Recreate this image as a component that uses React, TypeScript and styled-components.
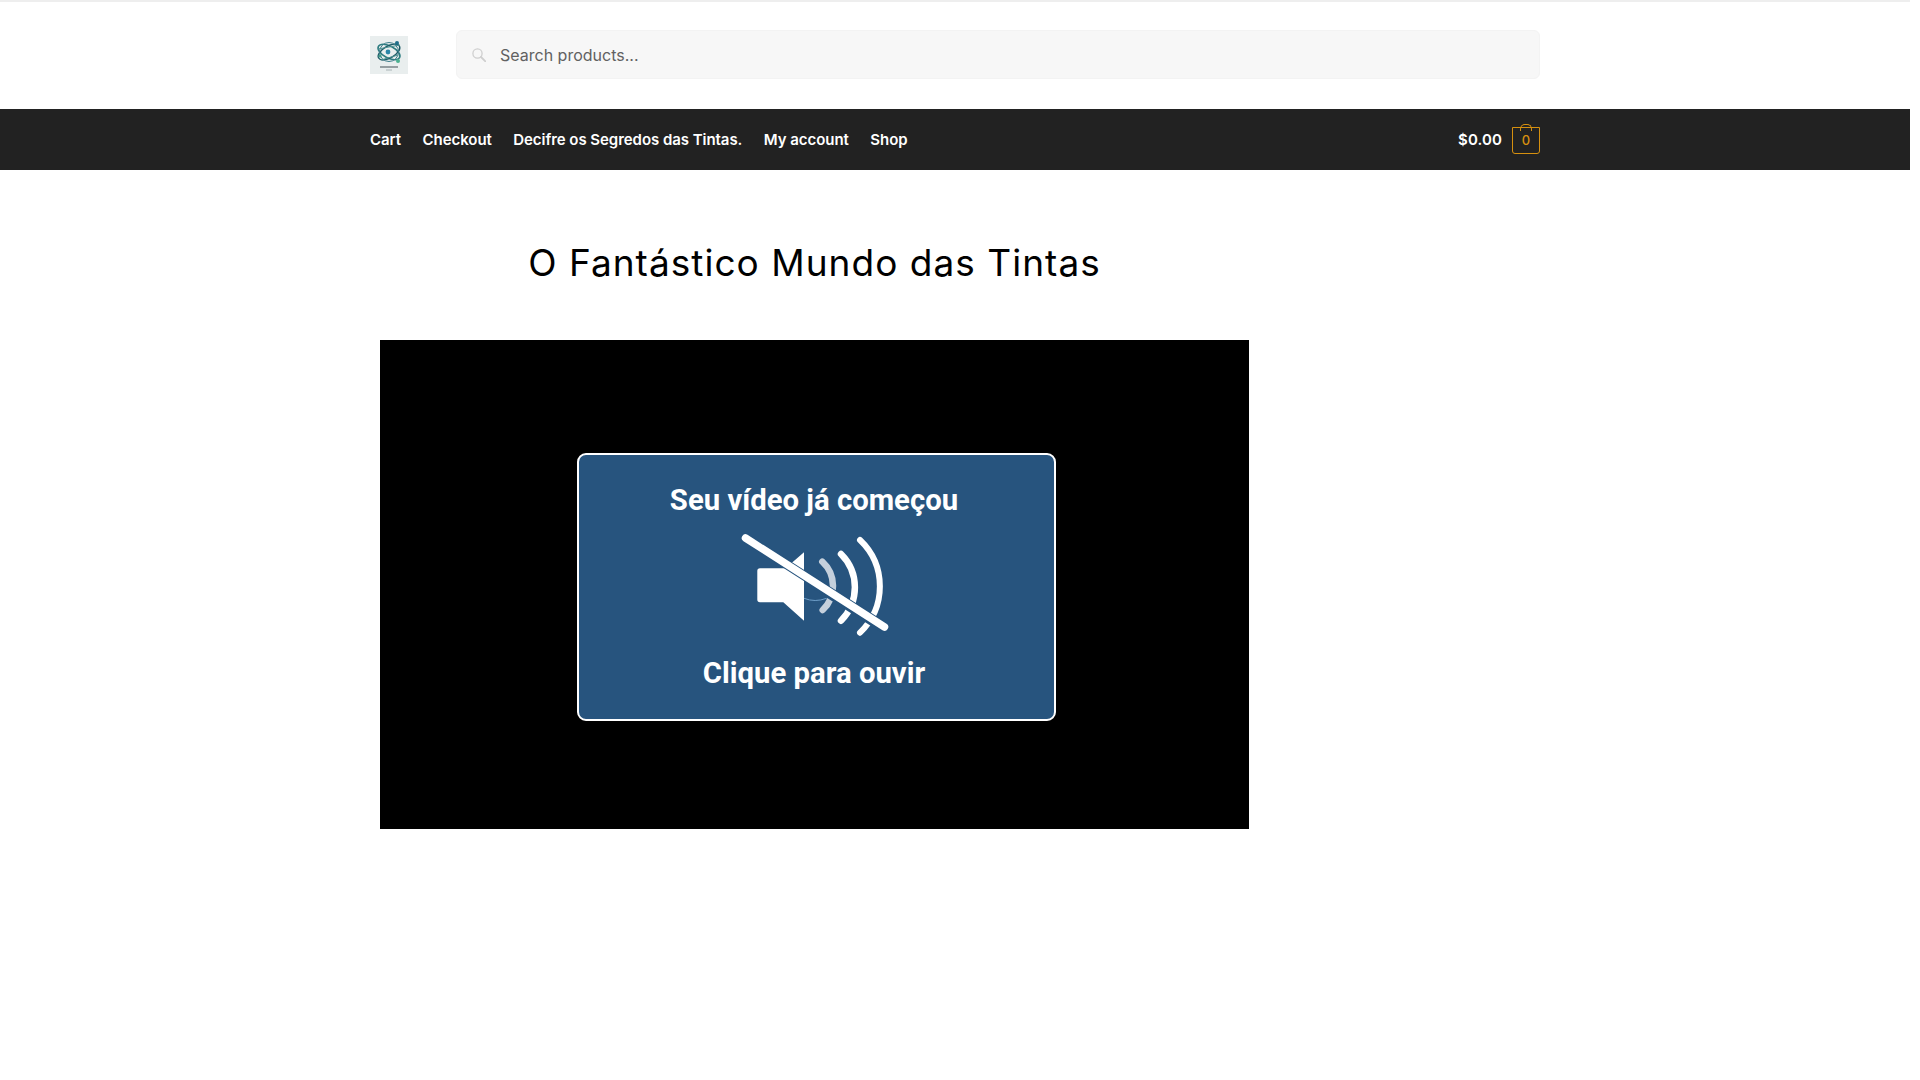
import React from "react";
import styled, { createGlobalStyle } from "styled-components";

const GlobalStyle = createGlobalStyle`
  html, body {
    margin: 0;
    padding: 0;
    background: #ffffff;
    font-family: Inter, "Liberation Sans", sans-serif;
  }
  * {
    box-sizing: border-box;
  }
`;

const Page = styled.div`
  width: 1910px;
  min-height: 1080px;
  background: #ffffff;
`;

const Masthead = styled.header`
  height: 109px;
  border-top: 2px solid #eeeeee;
  display: flex;
  justify-content: center;
`;

const Wrap = styled.div`
  width: 1170px;
  display: flex;
  align-items: center;
`;

const LogoBox = styled.a`
  display: block;
  width: 38px;
  height: 38px;
  margin-right: 48px;
  margin-top: -2px;
`;

const SearchBox = styled.form`
  flex: 1;
  height: 49px;
  margin-top: -2px;
  display: flex;
  align-items: center;
  gap: 14px;
  padding: 0 15px;
  background: #f7f7f7;
  border: 1px solid #f3f3f3;
  border-radius: 6px;
`;

const SearchInput = styled.input`
  flex: 1;
  border: 0;
  outline: 0;
  padding: 0;
  background: transparent;
  font: 400 16px Inter, "Liberation Sans", sans-serif;
  color: #616161;

  &::placeholder {
    color: #616161;
    opacity: 1;
  }
`;

const NavBar = styled.nav`
  height: 61px;
  background: #222222;
  display: flex;
  justify-content: center;
`;

const NavLinks = styled.div`
  display: flex;
  gap: 21.5px;
  flex: 1;
`;

const NavLink = styled.a`
  color: #ffffff;
  font-size: 15px;
  font-weight: 580;
  letter-spacing: -0.05px;
  text-decoration: none;
`;

const CartLink = styled.a`
  display: flex;
  align-items: center;
  gap: 10px;
  color: #ffffff;
  font-size: 15px;
  font-weight: 580;
  letter-spacing: 0.1px;
`;

const Bag = styled.span`
  position: relative;
  width: 28px;
  height: 27px;
  margin-top: 1px;
  border: 1px solid #d6900f;
  border-radius: 0 0 3px 3px;
  display: flex;
  align-items: center;
  justify-content: center;
  color: #d6900f;
  font-size: 13px;
  font-weight: 500;

  &::after {
    content: "";
    position: absolute;
    left: 7px;
    top: -4px;
    width: 10px;
    height: 6px;
    border: 1px solid #d6900f;
    border-bottom: 0;
    border-radius: 5px 5px 0 0;
    background: transparent;
  }
`;

const Content = styled.main`
  width: 1170px;
  margin: 0 auto;
  padding: 0 10px;
`;

const Column = styled.div`
  width: 869px;
  padding-top: 68px;
`;

const Title = styled.h1`
  margin: 0 0 52px;
  text-align: center;
  color: #000000;
  font-size: 37px;
  line-height: 50px;
  font-weight: 400;
  letter-spacing: 1.03px;
`;

const Video = styled.div`
  position: relative;
  height: 489px;
  background: #000000;
`;

const Overlay = styled.div`
  position: absolute;
  left: 197px;
  top: 113px;
  width: 479px;
  height: 268px;
  display: flex;
  flex-direction: column;
  align-items: center;
  padding-top: 25px;
  background: #27547e;
  border: 2px solid #ffffff;
  border-radius: 9px;
`;

const OverlayText = styled.div`
  width: 100%;
  padding-right: 5px;
  text-align: center;
  color: #ffffff;
  font-family: Roboto, "Liberation Sans", sans-serif;
  font-size: 29.3px;
  line-height: 40px;
  font-weight: 700;
`;

const MuteIcon = styled.svg`
  display: block;
  margin: 13px 0 15.5px;
  width: 150px;
  height: 104px;
  flex: none;
  position: relative;
  left: -2px;
`;

const SearchGlyph = () => (
  <svg width="14" height="14" viewBox="0 0 14 14" fill="none" stroke="#cfcfcf" strokeWidth="1.3">
    <circle cx="5.5" cy="5.5" r="4.6" />
    <path d="M9 9l4.4 4.4" strokeLinecap="round" strokeWidth="1.8" />
  </svg>
);

const Logo = () => (
  <svg width="38" height="38" viewBox="0 0 38 38" fill="none">
    <rect width="38" height="38" fill="#e9eeee" />
    <ellipse cx="19" cy="16" rx="12" ry="6" stroke="#2d7c80" strokeWidth="1.6" transform="rotate(28 19 16)" />
    <ellipse cx="19" cy="16" rx="12" ry="6" stroke="#1d5a66" strokeWidth="1.4" transform="rotate(-30 19 16)" />
    <circle cx="19" cy="16" r="9.5" stroke="#3d7d8a" strokeWidth="1" />
    <path d="M8 13L30 9M11 24L28 19" stroke="#4a8f90" strokeWidth="1" />
    <circle cx="18" cy="16" r="2.4" fill="#2a86a8" />
    <circle cx="27" cy="7" r="2" fill="#1f6f8b" />
    <circle cx="28" cy="25" r="2" fill="#4bb08f" />
    <circle cx="10" cy="20" r="1.6" fill="#3f9c88" />
    <path d="M10 31h18" stroke="#5f6b70" strokeWidth="1.2" />
    <path d="M16 34h6" stroke="#9aa5a8" strokeWidth="0.8" />
  </svg>
);

const BLUE = "#27547e";

const App = () => (
  <Page>
    <GlobalStyle />
    <Masthead>
      <Wrap>
        <LogoBox>
          <Logo />
        </LogoBox>
        <SearchBox>
          <SearchGlyph />
          <SearchInput placeholder="Search products..." />
        </SearchBox>
      </Wrap>
    </Masthead>
    <NavBar>
      <Wrap>
        <NavLinks>
          <NavLink>Cart</NavLink>
          <NavLink>Checkout</NavLink>
          <NavLink>Decifre os Segredos das Tintas.</NavLink>
          <NavLink>My account</NavLink>
          <NavLink>Shop</NavLink>
        </NavLinks>
        <CartLink>
          $0.00
          <Bag>0</Bag>
        </CartLink>
      </Wrap>
    </NavBar>
    <Content>
      <Column>
        <Title>O Fantástico Mundo das Tintas</Title>
        <Video>
          <Overlay>
            <OverlayText>Seu vídeo já começou</OverlayText>
            <MuteIcon viewBox="0 0 150 104" fill="none">
              <path
                d="M20 35.3H45.5L64 19.3V87.7L43.3 69.3H20Q17.3 69.3 17.3 66.6V38Q17.3 35.3 20 35.3Z"
                fill="#ffffff"
              />
              <path d="M64 65.3Q75 69.7 86.7 65.3" stroke="#6f9fc9" strokeWidth="1" />
              <path d="M82.3 28.7A33 33 0 0 1 82.7 77" stroke="#c5d0dc" strokeWidth="6.5" strokeLinecap="round" />
              <path d="M101 21A47 47 0 0 1 101 87.7" stroke="#ffffff" strokeWidth="6.5" strokeLinecap="round" />
              <path d="M120 7A64 64 0 0 1 120 99.7" stroke="#ffffff" strokeWidth="6" strokeLinecap="round" />
              <path d="M70 50.5L150 101.5" stroke={BLUE} strokeWidth="6" />
              <path d="M5.5 5L144.5 94" stroke={BLUE} strokeWidth="9.5" strokeLinecap="round" />
              <path d="M5.5 5L144.5 94" stroke="#ffffff" strokeWidth="7.5" strokeLinecap="round" />
            </MuteIcon>
            <OverlayText>Clique para ouvir</OverlayText>
          </Overlay>
        </Video>
      </Column>
    </Content>
  </Page>
);

export default App;
